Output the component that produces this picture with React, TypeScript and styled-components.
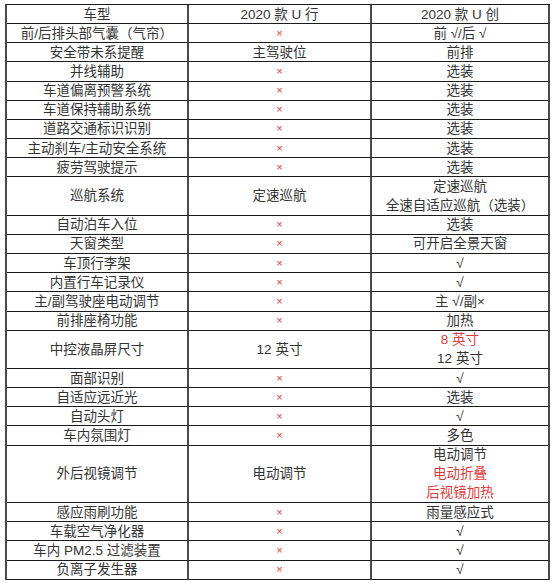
import styled, { createGlobalStyle } from 'styled-components';

const Global = createGlobalStyle`
  body {
    margin: 0;
    background: #fff;
    font-family: 'Liberation Sans', 'Noto Sans CJK SC', sans-serif;
  }
`;

const UNIT = 19.17;

const Wrap = styled.div`
  padding: 4px 0 0 5px;
`;

const Grid = styled.div`
  display: grid;
  grid-template-columns: 182px 183px 178px;
  width: max-content;
  border-left: 2px solid #4a4a4a;
  border-top: 1px solid #1a1a1a;
`;

const Cell = styled.div<{ $span: number }>`
  box-sizing: border-box;
  height: ${(p) => p.$span * UNIT}px;
  border-right: 2px solid #4a4a4a;
  border-bottom: 1px solid #1a1a1a;
  display: flex;
  flex-direction: column;
  align-items: center;
  justify-content: center;
  font-size: 13.5px;
  line-height: ${UNIT}px;
  color: #333;
  white-space: nowrap;
`;

const Line = styled.span<{ $red?: boolean }>`
  color: ${(p) => (p.$red ? '#e23b3b' : '#333')};
`;

const Cross = styled.span`
  color: #d9413f;
  font-size: 11px;
`;

type Val = string | string[] | null;

// null = 红色 ×
const rows: [string, Val, Val, number?, string[]?][] = [
  ['车型', '2020 款 U 行', '2020 款 U 创'],
  ['前/后排头部气囊（气帘）', null, '前 √/后 √'],
  ['安全带未系提醒', '主驾驶位', '前排'],
  ['并线辅助', null, '选装'],
  ['车道偏离预警系统', null, '选装'],
  ['车道保持辅助系统', null, '选装'],
  ['道路交通标识识别', null, '选装'],
  ['主动刹车/主动安全系统', null, '选装'],
  ['疲劳驾驶提示', null, '选装'],
  ['巡航系统', '定速巡航', ['定速巡航', '全速自适应巡航（选装）'], 2],
  ['自动泊车入位', null, '选装'],
  ['天窗类型', null, '可开启全景天窗'],
  ['车顶行李架', null, '√'],
  ['内置行车记录仪', null, '√'],
  ['主/副驾驶座电动调节', null, '主 √/副×'],
  ['前排座椅功能', null, '加热'],
  ['中控液晶屏尺寸', '12 英寸', ['8 英寸', '12 英寸'], 2, ['8 英寸']],
  ['面部识别', null, '√'],
  ['自适应远近光', null, '选装'],
  ['自动头灯', null, '√'],
  ['车内氛围灯', null, '多色'],
  ['外后视镜调节', '电动调节', ['电动调节', '电动折叠', '后视镜加热'], 3, ['电动折叠', '后视镜加热']],
  ['感应雨刷功能', null, '雨量感应式'],
  ['车载空气净化器', null, '√'],
  ['车内 PM2.5 过滤装置', null, '√'],
  ['负离子发生器', null, '√'],
];

function Content({ v, red = [] }: { v: Val; red?: string[] }) {
  if (v === null) return <Cross>×</Cross>;
  const lines = Array.isArray(v) ? v : [v];
  return (
    <>
      {lines.map((l) => (
        <Line key={l} $red={red.includes(l)}>
          {l}
        </Line>
      ))}
    </>
  );
}

export default function App() {
  return (
    <Wrap>
      <Global />
      <Grid>
        {rows.map(([name, a, b, span = 1, red]) => (
          <>
            <Cell $span={span} key={name + '0'}>
              <Line>{name}</Line>
            </Cell>
            <Cell $span={span} key={name + '1'}>
              <Content v={a} />
            </Cell>
            <Cell $span={span} key={name + '2'}>
              <Content v={b} red={red} />
            </Cell>
          </>
        ))}
      </Grid>
    </Wrap>
  );
}
